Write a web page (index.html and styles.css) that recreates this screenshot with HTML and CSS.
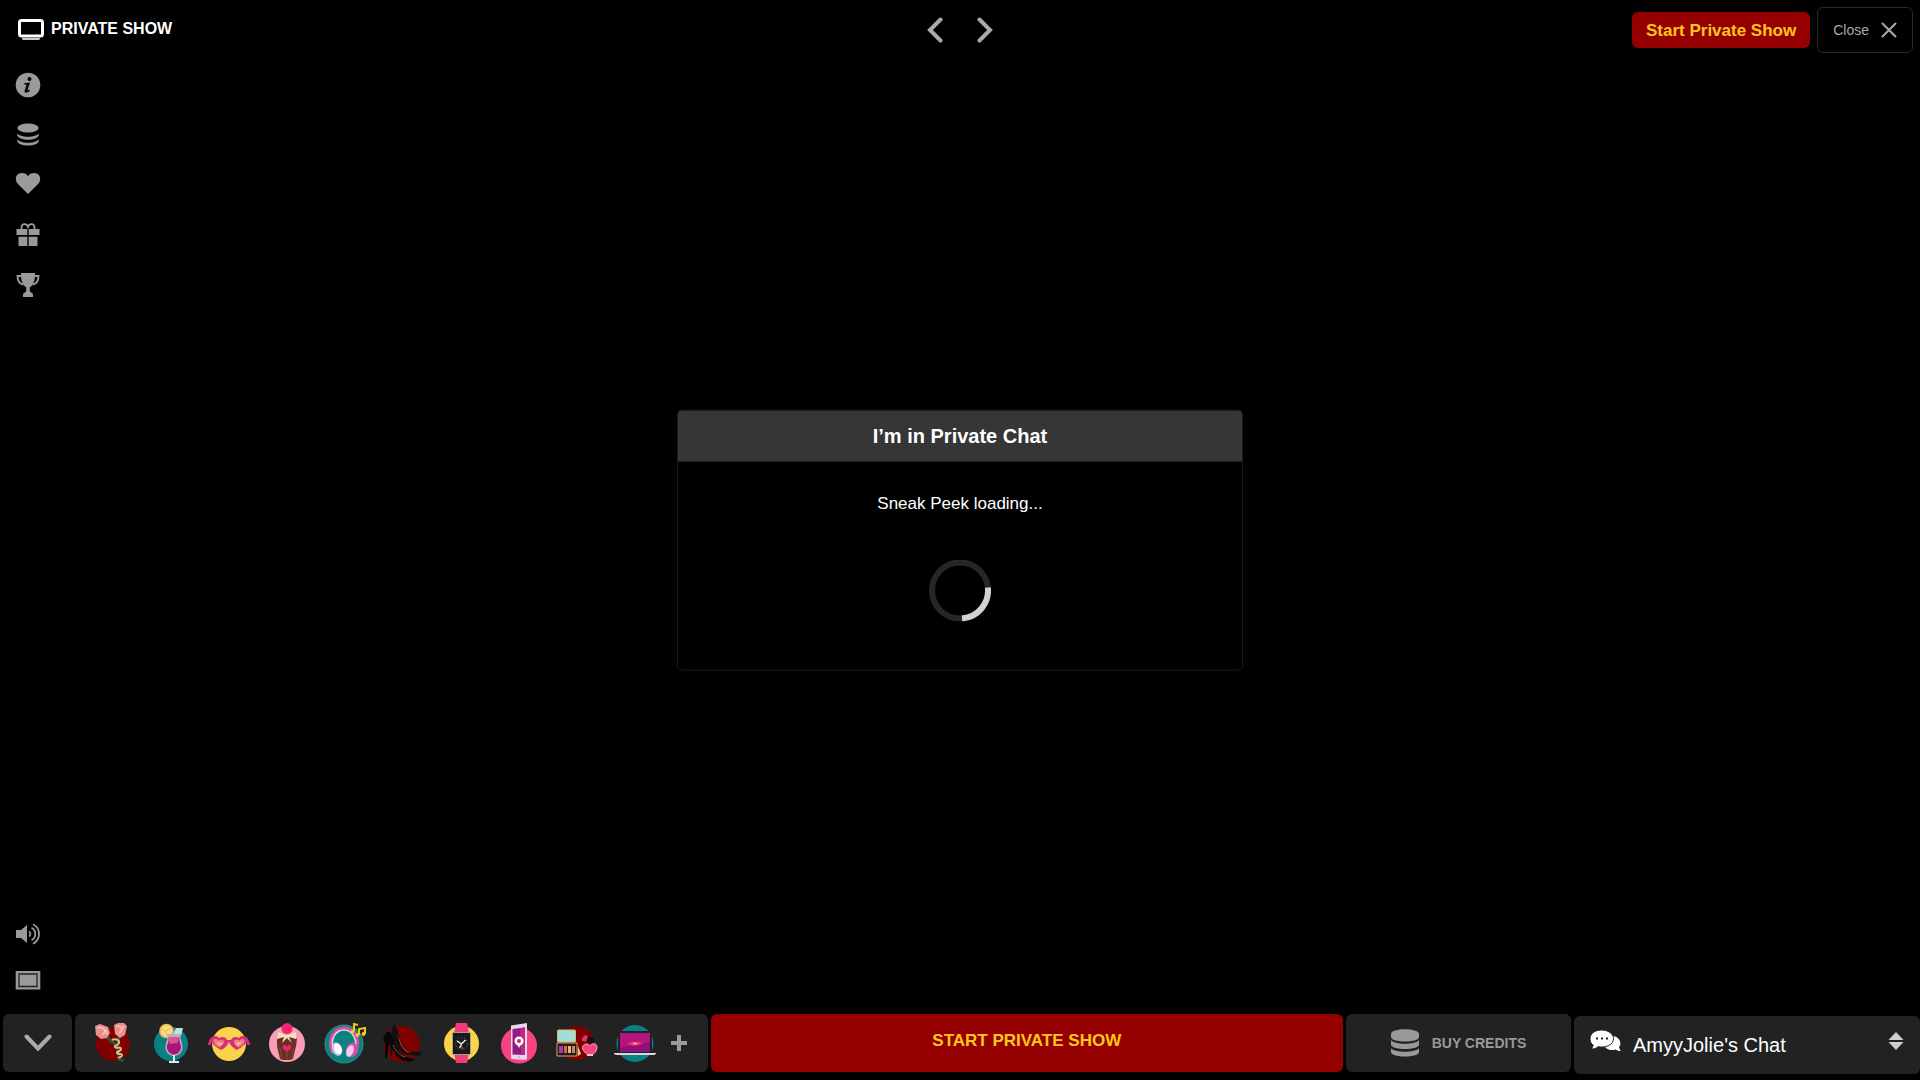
FILE: index.html
```html
<!DOCTYPE html>
<html lang="en">
<head>
  <meta charset="UTF-8" />
  <meta name="viewport" content="width=device-width, initial-scale=1.0" />
  <title>Private Show</title>
  <link rel="stylesheet" href="styles.css">
</head>
<body>
  <header>
    <div class="logo">
      <svg width="26" height="22" viewBox="0 0 26 22">
        <rect x="1.5" y="1.5" width="23" height="15.5" rx="2" fill="none" stroke="#fff" stroke-width="3" />
        <path d="M4 19h18v1l-1 1H5l-1-1z" fill="#ccc" />
      </svg>
      <span>PRIVATE SHOW</span>
    </div>
    <nav>
      <button aria-label="Previous"><svg width="16" height="26" viewBox="0 0 16 26"><path d="M13.5 2.500L3 13l10.500 10.500" /></svg></button>
      <button aria-label="Next"><svg width="16" height="26" viewBox="0 0 16 26"><path d="M2.500 2.500L13 13L2.500 23.500" /></svg></button>
    </nav>
    <div class="actions">
      <button class="start">Start Private Show</button>
      <button class="close">Close
        <svg width="16" height="16" viewBox="0 0 16 16"><path d="M1.500 1.500l13 13M14.500 1.500l-13 13" /></svg>
      </button>
    </div>
  </header>

  <main>
    <div class="tools">
      <button aria-label="Info">
        <svg width="26" height="26" viewBox="0 0 26 26">
          <circle cx="13" cy="13" r="12.300" />
          <circle cx="14.500" cy="7" r="2" fill="#000" />
          <path d="M9.300 11.200l5.700-.7-2.500 8 2.300-1-.2 1.400c-2 1.900-5.700 2.400-5 0l2-6.500-2.500.2z" fill="#000" />
        </svg>
      </button>
      <button aria-label="Credits">
        <svg width="26" height="26" viewBox="0 0 26 26">
          <ellipse cx="13" cy="6" rx="10.700" ry="4.500" />
          <path d="M2.300 11c2 5 19.400 5 21.400 0v2.500c-2 5.600-19.400 5.600-21.400 0zM2.300 17c2 5 19.400 5 21.400 0v2.500c-2 5.300-19.400 5.300-21.400 0z" />
        </svg>
      </button>
      <button aria-label="Favourite">
        <svg width="26" height="26" viewBox="0 0 26 26">
          <path d="M13 22L2.500 11.500C-.8 7.500.8 1 6.800 1c3 0 5 1.200 6.200 3.200C14.200 2.200 16.200 1 19.200 1c6 0 7.600 6.500 4.300 10.500z" />
        </svg>
      </button>
      <button aria-label="Gifts">
        <svg width="26" height="26" viewBox="0 0 26 26">
          <path d="M1.500 7h10.800v6H1.500zM13.700 7h10.800v6H13.700zM3.500 14.800h8.800V24H3.500zM13.700 14.800h8.800V24h-8.800z" />
          <path d="M6.500 7C6 .8 11.500 1 13 4.800C14.500 1 20 .8 19.500 7" fill="none" stroke="#9a9a9a" stroke-width="1.800" />
        </svg>
      </button>
      <button aria-label="Contest">
        <svg width="26" height="26" viewBox="0 0 26 26">
          <path d="M6 1h14c.3 7-1.800 12.500-5.200 14.300v4L18 22v3H8v-3l3.200-2.700v-4C7.800 13.500 5.700 8 6 1z" />
          <path d="M6.500 4h-4c0 5 2.500 8 6 8.500M19.500 4h4c0 5-2.500 8-6 8.500" fill="none" stroke="#9a9a9a" stroke-width="1.800" />
        </svg>
      </button>
    </div>

    <div class="tools tools-bottom">
      <button aria-label="Sound">
        <svg width="26" height="26" viewBox="0 0 26 26">
          <path d="M1 9h5l6-5v18l-6-5H1z" />
          <path d="M14 10.500a3 3 0 0 1 0 5M16.500 6.800a7 7 0 0 1 0 12.400M18 3.300c8 4 8 15.400 0 19.400" fill="none" stroke="#9a9a9a" stroke-width="1.800" />
        </svg>
      </button>
      <button aria-label="Screen size">
        <svg width="26" height="26" viewBox="0 0 26 26">
          <path d="M.7 4h24.600v18.500H.7z" />
          <path d="M4 7h18v12.500H4z" stroke="#222" stroke-width="1.300" />
        </svg>
      </button>
    </div>
  </main>

  <section class="modal">
    <h1>I’m in Private Chat</h1>
    <p>Sneak Peek loading...</p>
    <svg class="spinner" width="62" height="62" viewBox="0 0 62 62">
      <circle cx="31" cy="31" r="28" stroke="#262626" />
      <path d="M58.900 28A28 28 0 0 1 33 58.900" stroke="#d2d2d2" />
    </svg>
  </section>

  <footer>
    <button class="box" aria-label="Hide">
      <svg class="chevron" width="28" height="18" viewBox="0 0 28 18"><path d="M2.500 2.500L14 14.500L25.500 2.500" /></svg>
    </button>

    <div class="box gifts">
      <button aria-label="Roses">
        <svg width="44" height="44" viewBox="0 0 44 44">
          <circle cx="22" cy="23" r="17" fill="#800000" />
          <path d="M14 15l11 9M28 14l-2 12 3 14" fill="none" stroke="#31502b" stroke-width="3" />
          <path d="M21 19c3-2 8 0 7 3s-5 2-4 4 6-1 6 2-5 2-4 4 5 0 5 2-3 3-4 2" fill="none" stroke="#d9bd8e" stroke-width="2" />
          <path d="M4 5l5-2 8 3 2 6-3 5-6 1-5-4zM23 4l4-2 6 0 3 3-2 9-5 3-5-4z" fill="#e98f8c" />
          <path d="M6 7c3-2 8 0 8 4l-3 3M25 5c3 0 6 1 6 4l-3 4M33 5l-3 4M15 8l1 6" fill="none" stroke="#f9bfb8" stroke-width="1.500" />
          <path d="M28 38h6l-3 4z" fill="#1d5a35" />
        </svg>
      </button>
      <button aria-label="Cocktail">
        <svg width="44" height="44" viewBox="0 0 44 44">
          <circle cx="22" cy="23" r="17" fill="#078280" />
          <circle cx="17.500" cy="10" r="7.300" fill="#efb850" />
          <circle cx="17.500" cy="10" r="5.700" fill="#f9dc86" />
          <path d="M17 10l5-3M17 10l-5-2M17 10l1 5" stroke="#efb850" />
          <path d="M24 13l3-6 7 0-2 8z" fill="#b8e5e8" />
          <path d="M18 13h14c-2 5 2 8 1.500 14C33 33 28 35 25 35s-8-2-8.500-8C16 21 20 18 18 13z" fill="#c7a7c9" />
          <path d="M19.500 17h11c-1 4 2 6 1.500 10-.5 4-4 6.500-7 6.500S18.500 31 18 27c-.5-4 2.500-6 1.500-10z" fill="#a6177c" />
          <path d="M19.500 16h11l-2 6-8 1z" fill="#d7568d" />
          <path d="M25 34v6M20 41h10" stroke="#d7f0f0" stroke-width="2" />
        </svg>
      </button>
      <button aria-label="Sunglasses">
        <svg width="44" height="44" viewBox="0 0 44 44">
          <circle cx="22" cy="23" r="17" fill="#fbd34a" />
          <path d="M2 24l3-7M42 24l-3-7" stroke="#d52e7b" stroke-width="3" />
          <path d="M4 17c2-3 7-2 8 0 3-2 7-1 8 2h4c1-3 5-4 8-2 1-2 6-3 8 0 2 4-5 9-10 12-4-2-6-4-8-8-2 4-4 6-8 8C9 26 2 21 4 17z" fill="#d52e7b" />
          <path d="M6.500 18.500c2-1 4 0 5 1 2-1 5-1 6 1-1 3-3 5-5 6-4-2-7-5-6-8zM37.500 18.500c-2-1-4 0-5 1-2-1-5-1-6 1 1 3 3 5 5 6 4-2 7-5 6-8z" fill="#ee7a84" />
          <path d="M9 21l4 4 3-3zM28 22l3 3 4-4z" fill="#fbbd85" />
        </svg>
      </button>
      <button aria-label="Cupcake">
        <svg width="44" height="44" viewBox="0 0 44 44">
          <circle cx="22" cy="23" r="18" fill="#f99dbb" />
          <path d="M12 18l4-3h12l4 3-1 7-3 13-3 1h-7l-3-1-3-13z" fill="#6a3026" />
          <path d="M15 27l2 11M29 27l-2 11M22 30v8" stroke="#884737" />
          <path d="M18 25c1-2 3-1 4 1 1-2 3-3 4-1 1 3-2 4-4 6-2-2-5-3-4-6z" fill="#e92771" />
          <circle cx="22" cy="7.500" r="5.500" fill="#ed266f" />
          <path d="M13 11l8 3 2 0 8-3 0 7-7-2 3 6-5-5-5 5 2-6-7 2z" fill="#f6dfb7" />
        </svg>
      </button>
      <button aria-label="Headphones">
        <svg width="44" height="44" viewBox="0 0 44 44">
          <circle cx="21" cy="23" r="19" fill="#078280" stroke="#35938b" />
          <path d="M10 32C3 19 11 7 21 7s18 11 11 24" fill="none" stroke="#d94d9f" stroke-width="3" />
          <path d="M11 30C6 18 13 9 21 9s15 10 10 21" fill="none" stroke="#ead4ec" stroke-width="1.500" />
          <ellipse cx="14" cy="28" rx="5" ry="7" fill="#c9c5e6" transform="rotate(-20 14 28)" />
          <ellipse cx="15" cy="28" rx="3.500" ry="5.500" fill="#fff" transform="rotate(-20 15 28)" />
          <ellipse cx="29" cy="29" rx="6" ry="7.500" fill="#d94d9f" transform="rotate(20 29 29)" />
          <ellipse cx="27" cy="30" rx="3.500" ry="6" fill="#efcdf0" transform="rotate(20 27 30)" />
          <path d="M31 10V3l4 1M36 14V8l6-1v6" fill="none" stroke="#f4c71a" stroke-width="2" />
          <circle cx="29.500" cy="10.500" r="2" fill="#f4c71a" /><circle cx="34.500" cy="14" r="2" fill="#f4c71a" /><circle cx="40.500" cy="13" r="2" fill="#f4c71a" />
        </svg>
      </button>
      <button aria-label="High heels">
        <svg width="44" height="44" viewBox="0 0 44 44">
          <circle cx="20.500" cy="23" r="18" fill="#800000" />
          <path d="M13 3c3 3 4 8 6 14 3 8 7 14 12 14 4-1 9 0 10 2-3 3-10 1-14 1-7-1-10-7-14-14l-2 14H9l1-14C11 14 10 8 13 3z" fill="#111" />
          <path d="M5 12c2-3 5-1 6 3 3 10 9 19 13 21 4 1 8 1 9 3-3 3-9 1-12 0-5-2-8-9-13-16L6 37H4l0-15C1 18 3 15 5 12z" fill="#080808" />
          <path d="M16 13c4 6 5 17 14 18-5 2-9-4-11-9z" fill="#e0251c" />
          <path d="M12 24c3 6 7 11 12 12" fill="none" stroke="#676767" />
        </svg>
      </button>
      <button aria-label="Smart watch">
        <svg width="44" height="44" viewBox="0 0 44 44">
          <circle cx="22.500" cy="22.500" r="17.500" fill="#fbd34a" />
          <path d="M17 2h11l2 10H15zM15 32h15l-2 10H17z" fill="#f53b7c" />
          <rect x="13" y="11" width="19" height="23" rx="1.500" fill="#aaa08c" />
          <rect x="14" y="12" width="17" height="21" fill="#17191c" />
          <circle cx="22.500" cy="22.500" r="6" fill="none" stroke="#777" stroke-dasharray="1 2" />
          <path d="M18 20l4.500 3 4-4M22.500 23l-2 4" fill="none" stroke="#fff" stroke-width="1.300" />
          <path d="M22 24l2 4" stroke="#ee6e22" />
        </svg>
      </button>
      <button aria-label="Phone">
        <svg width="44" height="44" viewBox="0 0 44 44">
          <circle cx="22" cy="24.500" r="18" fill="#f94284" />
          <path d="M14 4.500L30 2v36l-2 1-13-1-1-1z" fill="#ead6e9" />
          <path d="M15.500 8L28 6.500V34l-12.500-.5z" fill="#8f1b83" />
          <path d="M23 7l5-.5V34h-4z" fill="#bd268b" />
          <circle cx="22" cy="20" r="4.500" fill="#fff" /><path d="M20 23l2 4 2-4z" fill="#fff" /><circle cx="22" cy="20" r="2" fill="#e3214f" />
          <circle cx="22" cy="36" r="1" fill="#c2adc4" />
        </svg>
      </button>
      <button aria-label="Make-up">
        <svg width="44" height="44" viewBox="0 0 44 44">
          <circle cx="22" cy="22" r="17" fill="#800000" />
          <rect x="2.500" y="9" width="18" height="12" rx="1" fill="#9fdfd8" stroke="#e7b663" />
          <path d="M2 22h20v13H2z" fill="#25191c" stroke="#d9aa60" />
          <path d="M4 25h4v7H4z" fill="#a63bae" /><path d="M9 25h3v7H9z" fill="#d26b37" /><path d="M13 25h3v7h-3z" fill="#e6b58e" /><path d="M17 25h3v7h-3z" fill="#bd8b5b" />
          <path d="M27 20V17l3-3 3 1v6z" fill="#e22f6d" /><path d="M33 15l6 2v5h-8z" fill="#19120f" />
          <path d="M23 35l0-10 3 8z" fill="#eac39b" />
          <path d="M29 24c3-2 5-1 6 1 2-3 7-3 7 1 0 4-3 7-5 8h-4c-3-2-8-7-4-10z" fill="#f54482" stroke="#f7a7b5" />
          <path d="M32 33h6v2h-6z" fill="#f4c9ce" />
        </svg>
      </button>
      <button aria-label="Laptop">
        <svg width="44" height="44" viewBox="0 0 44 44">
          <circle cx="22" cy="22.500" r="18.500" fill="#078280" />
          <rect x="5" y="10" width="34" height="23" rx="1" fill="#222" />
          <path d="M7 12h30v19H7z" fill="#8e0f7a" />
          <path d="M7 12h30v9L7 27z" fill="#b4147f" />
          <path d="M14 22.500l5-2 3 1 3-1 5 2-5 2h-6z" fill="#ed326f" />
          <path d="M20 22.500h4" stroke="#ff9a9a" stroke-width="2" />
          <path d="M1 32h42v1l-2 1H3l-2-1z" fill="#ded5e0" />
        </svg>
      </button>
      <button aria-label="More gifts"><svg width="16" height="16" viewBox="0 0 16 16"><path d="M8 0v16M0 8h16" stroke="#9a9a9a" stroke-width="4" /></svg></button>
    </div>

    <button class="box start-bar">START PRIVATE SHOW</button>

    <button class="box credits">
      <svg width="28" height="28" viewBox="0 0 28 28">
        <path d="M0 5C0-1.300 28-1.300 28 5v3c0 6-28 6-28 0zM0 11c3 5 25 5 28 0v4.500c0 6-28 6-28 0zM0 19c3 5 25 5 28 0v4c0 6-28 6-28 0z" />
      </svg>
      BUY CREDITS
    </button>

    <button class="box chat">
      <svg width="32" height="22" viewBox="0 0 32 22">
        <path d="M20 6c8-1 13 6 9 11l1.500 4c-2 0-4-.6-5-1.500-5 1.500-10-.5-11-3.500z" fill="#fff" />
        <path d="M11.500 0C4.500 0 0 4 0 8.800c0 3 1.200 5 3.300 6.400L1.500 19c2.800 0 5-.8 6.500-2.300 8 1.500 15.500-2 15.500-8C23.500 4 18.500 0 11.500 0z" fill="#fff" stroke="#222" />
        <path d="M6 8.500h2M11 8.500h2M16 8.500h2" stroke="#222" stroke-width="2" />
      </svg>
      <span>AmyyJolie's Chat</span>
      <svg width="16" height="18" viewBox="0 0 16 18"><path d="M8 0l7.500 8H.5zM8 18L.5 10h15z" fill="#d0d0d0" /></svg>
    </button>
  </footer>
</body>
</html>
```

FILE: styles.css
```css
* {
  box-sizing: border-box;
}

body {
  margin: 0;
  min-height: 100vh;
  display: flex;
  flex-direction: column;
  font-family: "Liberation Sans", Arial, sans-serif;
  background-color: #000;
  color: white;
}

button {
  padding: 0;
  border: none;
  background: none;
  color: inherit;
  font-family: inherit;
  cursor: pointer;
}

svg {
  display: block;
  flex: none;
}

header {
  display: grid;
  grid-template-columns: 1fr auto 1fr;
  align-items: center;
  height: 60px;
  padding: 0 7px;
}

.logo {
  display: flex;
  gap: 7px;
  padding-left: 11px;
  font-size: 16px;
  line-height: 20px;
  font-weight: bold;
}

nav {
  display: flex;
  gap: 34px;
}

nav path,
.close path,
.chevron path {
  fill: none;
  stroke: #aaa;
  stroke-width: 4;
  stroke-linecap: round;
}

.close path {
  stroke-width: 2;
}

.actions {
  display: flex;
  justify-content: flex-end;
  align-items: center;
  gap: 7px;
}

.start {
  padding: 2px 14px 0;
  height: 36px;
  border-radius: 6px;
  background-color: #940000;
  color: #ffc61a;
  font-size: 17px;
  font-weight: bold;
}

.close {
  display: flex;
  align-items: center;
  gap: 12px;
  height: 46px;
  padding: 0 15px;
  border: 1px solid #2b2b2b;
  border-radius: 6px;
  color: #aaa;
  font-size: 14px;
}

main {
  flex: 1;
  display: flex;
  flex-direction: column;
  justify-content: space-between;
  padding: 12px 15px 21px;
}

.tools {
  display: flex;
  flex-direction: column;
  align-items: flex-start;
  gap: 24px;
  fill: #9a9a9a;
}

.tools-bottom {
  gap: 20px;
}

.modal {
  position: absolute;
  top: 50%;
  left: 50%;
  transform: translate(-50%, -50%);
  width: 566px;
  padding-bottom: 48px;
  border: 1px solid #1c1c1c;
  border-radius: 5px;
  overflow: hidden;
  text-align: center;
}

.modal h1 {
  margin: 0;
  background-color: #363636;
  font-size: 20px;
  line-height: 51px;
}

.modal p {
  margin: 32px 0 46px;
  font-size: 17px;
  line-height: 20px;
}

.spinner {
  margin: 0 auto;
  fill: none;
  stroke-width: 6;
}

footer {
  display: grid;
  grid-template-columns: 69px 1fr 1fr 225px 346px;
  gap: 3px;
  padding: 0 0 8px 3px;
}

.box {
  display: flex;
  align-items: center;
  justify-content: center;
  height: 58px;
  border-radius: 6px;
  background-color: #222;
}

.gifts {
  gap: 14px;
  padding-right: 4px;
}

.start-bar {
  padding-bottom: 4px;
  background-color: #940000;
  color: #ffc61a;
  font-size: 17px;
  font-weight: bold;
}

.credits {
  gap: 13px;
  color: #999;
  fill: #999;
  font-size: 14px;
  font-weight: bold;
}

.chat {
  gap: 11px;
  margin-top: 2px;
  margin-bottom: -2px;
  padding: 0 16px;
  font-size: 20px;
}

.chat span {
  flex: 1;
  text-align: left;
}

.chat svg {
  margin-bottom: 8px;
}
```
